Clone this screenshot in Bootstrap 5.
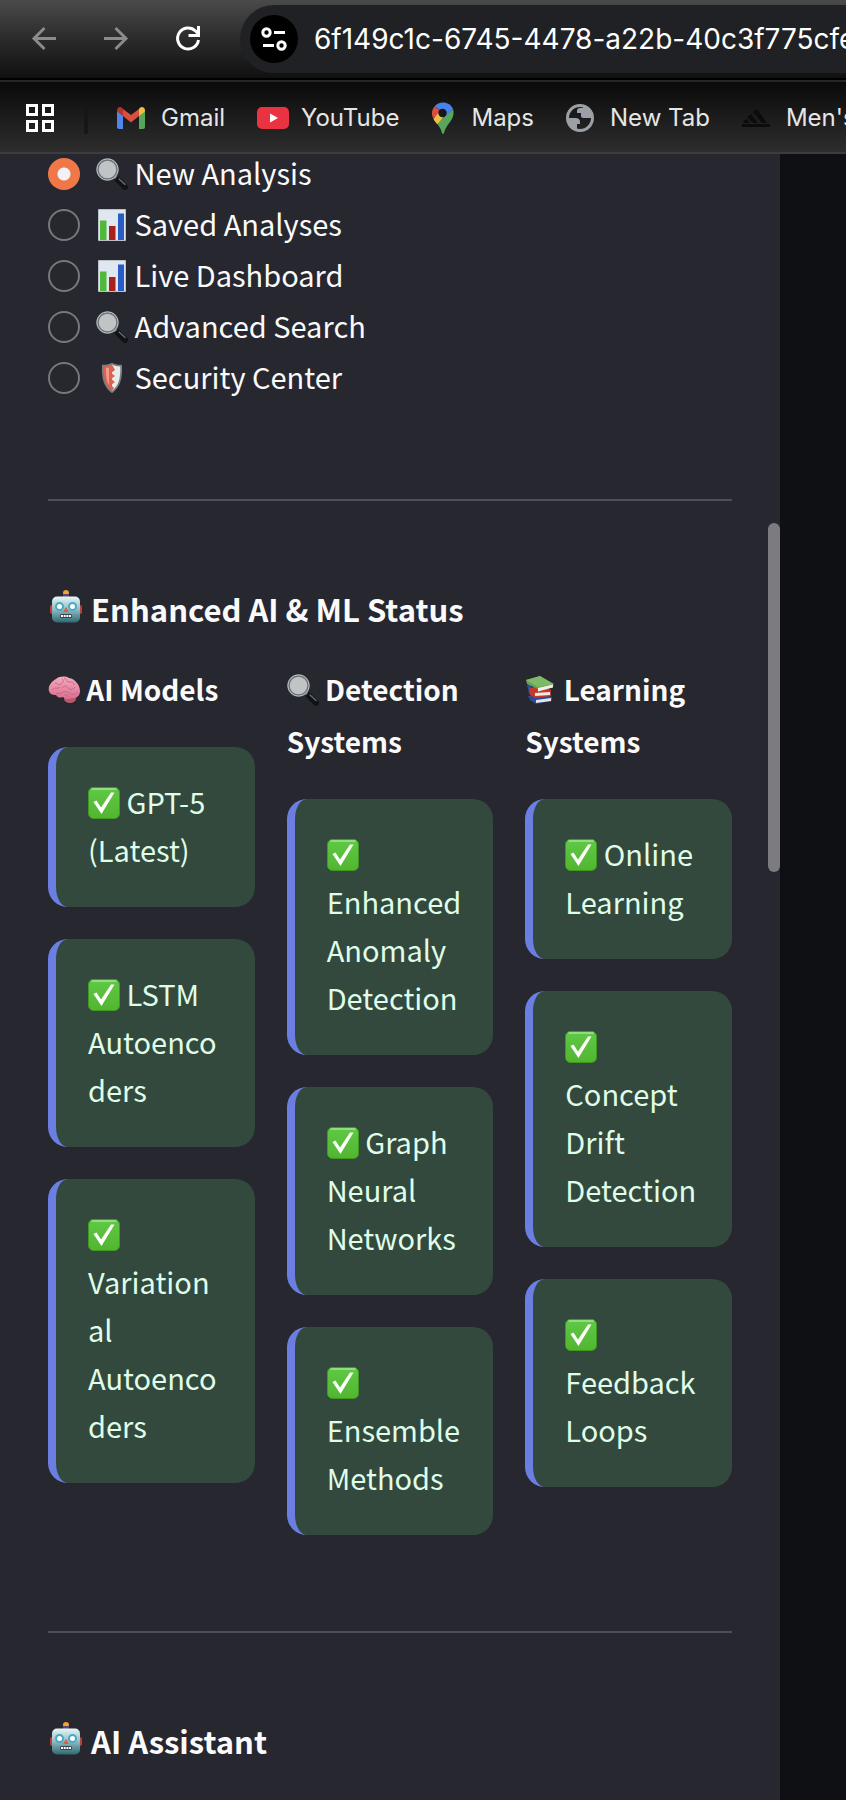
<!DOCTYPE html>
<html lang="en">
<head>
<meta charset="utf-8">
<meta name="viewport" content="width=device-width, initial-scale=1">
<title>Enhanced AI &amp; ML Status</title>
<link href="https://cdn.jsdelivr.net/npm/bootstrap@5.3.0/dist/css/bootstrap.min.css" rel="stylesheet">
<style>
  body { background: #0e1014; color: #fafafa; font-family: "Noto Sans CJK SC", "Noto Sans", sans-serif; font-size: 29px; line-height: 48px; overflow-x: hidden; }
  a { color: inherit; text-decoration: none; }
  .chrome { font-family: Inter, Roboto, sans-serif; white-space: nowrap; }
  .chrome svg { flex: none; }
  .toolbar { height: 78px; padding: 0 0 0 28px; background: linear-gradient(#4a4a4a, #2b2b2b 50%, #101010); }
  .tool-set { gap: 40px; }
  .tool-btn { width: 32px; height: 32px; padding: 0; border: 0; background: none; flex: none; }
  .address { height: 68px; margin-left: 36px; padding-left: 10px; border-radius: 34px 0 0 34px; background: #202124; min-width: 0; }
  .site-btn { width: 48px; height: 48px; padding: 0; border: 0; border-radius: 50%; background: #000; }
  .url-input { border: 0; background: none; color: #fff; font-size: 28px; line-height: 40px; padding: 0; outline: 0; min-width: 0; }
  .bookmarks { height: 74px; padding: 2px 0 0 26px; border-top: 2px solid #262626; border-bottom: 2px solid #3c3c3c; background: linear-gradient(#0a0a0a, #2d2d2d); color: #e6e6e6; font-size: 24px; line-height: 32px; box-shadow: 0 -2px #000; margin-top: 2px; }
  .divider { width: 4px; height: 32px; margin: 0 29px 0 26px; background: #161616; border-radius: 2px; flex: none; }
  .bookmark-set { gap: 32px; }
  .sidebar { width: calc(100% - 66px); max-width: 780px; min-height: calc(100vh - 154px); background: #272730; padding: 4px 48px 32px; }
  .nav-options { gap: 19px; padding-bottom: 9px; }
  .nav-option { gap: 16px; height: 32px; line-height: 28px; }
  .nav-option input { appearance: none; width: 32px; height: 32px; margin: 0; border: 2px solid #77777c; border-radius: 50%; flex: none; }
  .nav-option input:checked { border: 0; background: radial-gradient(circle, #f0f2f6 6px, #f07848 7px); }
  .rule { margin: 96px 0 0; border: 0; border-top: 2px solid #4f4f58; opacity: 1; }
  .title { margin: 86px 0 0; font-size: 31px; line-height: 44px; font-weight: 700; }
  .group-title { font-size: 28px; line-height: 52px; font-weight: 700; margin: 0; }
  .status-cols { display: grid; grid-template-columns: repeat(3, minmax(0, 1fr)); gap: 32px; margin-top: 32px; }
  .status-col { display: flex; flex-direction: column; gap: 32px; }
  .status-box { background: #34493e; color: #dffde9; border-left: 8px solid #6b7fe3; border-radius: 20px; padding: 30px 32px 34px; overflow-wrap: anywhere; }
  .emo { width: 32px; height: 32px; vertical-align: -5px; }
  .title .emo { width: 36px; height: 36px; vertical-align: -3px; }
  .thumb { width: 12px; height: 349px; top: 369px; right: 0; border-radius: 6px; background: #7b7b80; }
</style>
</head>
<body>
<svg class="position-absolute" width="0" height="0" aria-hidden="true">
  <defs>
    <linearGradient id="gCheck" x1="0" y1="0" x2="0" y2="1"><stop offset="0" stop-color="#5fc946"/><stop offset="1" stop-color="#52b52f"/></linearGradient>
    <linearGradient id="gRobot" x1="0" y1="0" x2="0" y2="1"><stop offset="0" stop-color="#e6f7f7"/><stop offset=".5" stop-color="#8fbcc3"/><stop offset="1" stop-color="#2f6873"/></linearGradient>
    <linearGradient id="gBrain" x1="0" y1="0" x2="0" y2="1"><stop offset="0" stop-color="#f5a9c0"/><stop offset="1" stop-color="#d9708f"/></linearGradient>
  </defs>
  <symbol id="check" viewBox="0 0 32 32"><rect x=".5" y=".5" width="31" height="31" rx="5" fill="url(#gCheck)" stroke="#3f9a24"/><path d="M4 2h24" stroke="#a5e58f" stroke-width="1.5" stroke-linecap="round"/><path d="M5.500 15l3-1.500 4.500 7L23 5.500h3.500L13.500 27z" fill="#fff"/></symbol>
  <symbol id="lens" viewBox="0 0 32 32"><path d="M18 18l4 4" stroke="#8a9196" stroke-width="3"/><path d="M22 22l7 7" stroke="#101314" stroke-width="6" stroke-linecap="round"/><path d="M23 21l6 5.500" stroke="#6b7377" stroke-width="1.200" stroke-linecap="round"/><circle cx="11.500" cy="11.500" r="10" fill="#c2c3c5" stroke="#6d7478" stroke-width="2.500"/><circle cx="11.500" cy="11.500" r="10.600" fill="none" stroke="#b6c2ca" stroke-width="1"/></symbol>
  <symbol id="chart" viewBox="0 0 32 32"><path d="M2.500.500h27v31h-27z" fill="#dfe8f1" stroke="#b9c0ca"/><path d="M4 11.500h6.500V31H4z" fill="#50b93a"/><path d="M13 17h6.500v14H13z" fill="#a9211b"/><path d="M22 4.500h6V31h-6z" fill="#285bc4"/></symbol>
  <symbol id="shield" viewBox="0 0 32 32"><path d="M16 .700c3 1.800 6.500 2 10 2 .6 14-1.500 22-10 28.500C7.500 24.700 5.400 16.700 6 2.700c3.500 0 7-.2 10-2z" fill="#777d80"/><path d="M16 2.500c2.700 1.400 5.500 1.900 8.300 2 .3 12.200-1.600 19-8.300 24.400z" fill="#e9eaea"/><path d="M16 2.500C13.300 3.900 10.500 4.400 7.700 4.500 7.400 16.700 9.300 23.500 16 28.900l2-3-3-3 4-3-4-3 4-3-4-3 4-3z" fill="#dc6350"/><path d="M10 6c0 8 .5 13 3 17V5.500z" fill="#f29b88"/></symbol>
  <symbol id="robot" viewBox="-2 -1 36 36"><circle cx="16" cy="3" r="3" fill="#f0a32d"/><path d="M13 4h6v4h-6z" fill="#5c4476"/><rect x="0" y="15" width="4" height="9" rx="2" fill="#bd4038"/><rect x="28" y="15" width="4" height="9" rx="2" fill="#bd4038"/><rect x="2" y="6.500" width="28" height="26" rx="5" fill="url(#gRobot)"/><g fill="#fff" stroke="#49a9c4" stroke-width="2"><circle cx="9.500" cy="16.500" r="3.500"/><circle cx="22.500" cy="16.500" r="3.500"/></g><path d="M16 17l3 5h-6z" fill="#dc5d4a"/><rect x="10" y="24" width="12" height="4" rx="1.500" fill="#37444a"/><path d="M11 26h10" stroke="#fff" stroke-width="2" stroke-dasharray="2 .7"/></symbol>
  <symbol id="brain" viewBox="0 0 32 32"><ellipse cx="22" cy="25" rx="6" ry="4" fill="#b9586f"/><path d="M1 17C-.500 12 4 7 8 5c4-3 9-3 13-1 6 1 11 7 11 13 0 5-4 8-8 7-4 2-7 1-9-1-3 1-5 1-7-2-4 0-6-1-7-4z" fill="url(#gBrain)"/><path d="M4 16c3-4 5 0 8-3M7 9c3 0 3 3 6 1s3-4 1-5M16 4c3 1 2 4 5 4s5 0 5 3M14 14c2-3 5-2 6 0s5 2 7-1M8 20c2-2 4 1 6-1s5-2 7 0 6 2 9-1M16 22c1-2 4-1 5 1" fill="none" stroke="#c9688a" stroke-width="1"/></symbol>
  <symbol id="books" viewBox="0 0 32 32"><path d="M3 22l14-2 10 3v4l-16 3-6-4z" fill="#2b4c9a"/><path d="M11 26l15-2v3l-15 2z" fill="#e6e6e6"/><path d="M2 11l4-1 1 11-3-1z" fill="#2b4c9a"/><path d="M4 14l12-2 10 4v6l-16 2-5-3z" fill="#c13a2c"/><path d="M10 19l15-1v3l-15 1z" fill="#f0ece4"/><path d="M1 6L15 2l14 9-16 4L2 10z" fill="#67a450"/><path d="M1 6L15 2l14 8-16 3z" fill="#7fb868"/><path d="M13 14l15-3.500v3L13 17.500z" fill="#f0f0ea"/></symbol>
</svg>

<header class="chrome overflow-hidden">
  <div class="toolbar d-flex align-items-center">
    <div class="tool-set d-flex">
      <button class="tool-btn" type="button" aria-label="Back"><svg class="d-block" width="32" height="32" viewBox="0 0 32 32" fill="none" stroke="#8b8b8b" stroke-width="3"><path d="M28 15.500H6M16.500 5L6 15.500 16.500 26"/></svg></button>
      <button class="tool-btn" type="button" aria-label="Forward"><svg class="d-block" width="32" height="32" viewBox="0 0 32 32" fill="none" stroke="#8b8b8b" stroke-width="3"><path d="M4 15.500h22M15.500 5L26 15.500 15.500 26"/></svg></button>
      <button class="tool-btn" type="button" aria-label="Reload"><svg class="d-block" width="32" height="32" viewBox="0 0 32 32" fill="none" stroke="#fff" stroke-width="3"><path d="M26.500 17A10.500 10.500 0 1 1 23.500 8l3 3M26.500 3v9.500h-10"/></svg></button>
    </div>
    <div class="address d-flex align-items-center flex-grow-1">
      <button class="site-btn flex-shrink-0" type="button" aria-label="Site information"><svg class="d-block m-auto" width="28" height="28" viewBox="0 0 28 28" fill="none" stroke="#fff" stroke-width="3"><circle cx="6.500" cy="7.500" r="3.700"/><path d="M14 7.500h11M3 20.500h11"/><circle cx="21.500" cy="20.500" r="3.700"/></svg></button>
      <input class="url-input flex-grow-1 ms-3" type="text" aria-label="Address" value="6f149c1c-6745-4478-a22b-40c3f775cfe">
    </div>
  </div>
  <nav class="bookmarks d-flex align-items-center" aria-label="Bookmarks">
    <button class="tool-btn" type="button" aria-label="Apps"><svg class="d-block" width="28" height="28" viewBox="0 0 28 28" fill="none" stroke="#fff" stroke-width="3"><path d="M1.500 1.500h9v9h-9zM17.500 1.500h9v9h-9zM1.500 17.500h9v9h-9zM17.500 17.500h9v9h-9z"/></svg></button>
    <span class="divider"></span>
    <div class="bookmark-set d-flex">
      <a class="d-flex align-items-center gap-3" href="#"><svg width="28" height="22" viewBox="0 0 28 22"><path d="M0 4l6 4v14H2a2 2 0 0 1-2-2z" fill="#5086ec"/><path d="M28 4l-6 4v14h4a2 2 0 0 0 2-2z" fill="#58a55c"/><path d="M6 2l8 6 8-6v7l-8 6.500L6 9z" fill="#d95040"/><path d="M0 3.500C0 .500 3-.800 5 .800L6 2v7L0 4.500z" fill="#b5352a"/><path d="M28 3.500c0-3-3-4.300-5-2.700L22 2v7l6-4.500z" fill="#f2bd42"/></svg>Gmail</a>
      <a class="d-flex align-items-center" style="gap:12px" href="#"><svg width="32" height="22" viewBox="0 0 32 22"><rect width="32" height="22" rx="5" fill="#ea3340"/><path d="M13 6.500l8 4.500-8 4.500z" fill="#fff"/></svg>YouTube</a>
      <a class="d-flex align-items-center gap-3" href="#"><svg width="24" height="32" viewBox="0 0 24 32"><path d="M22 7c1.500 5 0 9-3 13-3.500 4.500-5 7-6 11-.5 1.300-1.500 1.300-2 0-1-4-2.500-6-5-9.500z" fill="#58a55c"/><path d="M7.500 9.500L2.500 17c1 2 2.300 3.500 3.700 5.200L15.500 12z" fill="#f2bd42"/><path d="M3.500 4.500l5.500 4L2.500 17C.500 13 0 9 3.500 4.500z" fill="#d95040"/><path d="M3.500 4.500C8-1.500 19-1 22 7l-7 7-6-6z" fill="#4a80ea"/><circle cx="11.500" cy="11" r="4.200" fill="#171717"/></svg>Maps</a>
      <a class="d-flex align-items-center gap-3" href="#"><svg width="28" height="28" viewBox="0 0 28 28"><circle cx="14" cy="14" r="12.500" fill="none" stroke="#9aa0a6" stroke-width="3"/><path d="M2 14h7c3 0 5 1 5 4v2h-3v6C5 25 1 19 2 14zM17 2v2h-3c-2 0-3 1-3 3v2h4v3c0 2 2 2 4 2h7c1-5-3-11-9-12z" fill="#9aa0a6"/></svg>New Tab</a>
      <a class="d-flex align-items-center gap-3" href="#"><svg width="28" height="20" viewBox="0 0 28 20" fill="#0c0c0c"><path d="M11 4l4-3 10 14h-5zM5 9l4-3 7 9h-5zM1 13l4-2 3 4H2zM0 16h28v3H0z"/></svg>Men's</a>
    </div>
  </nav>
</header>

<main class="sidebar position-relative">
  <div class="thumb position-absolute"></div>
  <fieldset class="nav-options d-flex flex-column">
    <legend class="visually-hidden">Navigation</legend>
    <label class="nav-option d-flex"><input type="radio" name="page" checked><span><svg class="emo"><use href="#lens"/></svg> New Analysis</span></label>
    <label class="nav-option d-flex"><input type="radio" name="page"><span><svg class="emo"><use href="#chart"/></svg> Saved Analyses</span></label>
    <label class="nav-option d-flex"><input type="radio" name="page"><span><svg class="emo"><use href="#chart"/></svg> Live Dashboard</span></label>
    <label class="nav-option d-flex"><input type="radio" name="page"><span><svg class="emo"><use href="#lens"/></svg> Advanced Search</span></label>
    <label class="nav-option d-flex"><input type="radio" name="page"><span><svg class="emo"><use href="#shield"/></svg> Security Center</span></label>
  </fieldset>
  <hr class="rule">
  <h3 class="title"><svg class="emo"><use href="#robot"/></svg> Enhanced AI &amp; ML Status</h3>
  <div class="status-cols">
    <section class="status-col">
      <h4 class="group-title"><svg class="emo"><use href="#brain"/></svg> AI Models</h4>
      <div class="status-box"><svg class="emo"><use href="#check"/></svg> GPT-5 (Latest)</div>
      <div class="status-box"><svg class="emo"><use href="#check"/></svg> LSTM Autoencoders</div>
      <div class="status-box"><svg class="emo"><use href="#check"/></svg> Variational Autoencoders</div>
    </section>
    <section class="status-col">
      <h4 class="group-title"><svg class="emo"><use href="#lens"/></svg> Detection Systems</h4>
      <div class="status-box"><svg class="emo"><use href="#check"/></svg> Enhanced Anomaly Detection</div>
      <div class="status-box"><svg class="emo"><use href="#check"/></svg> Graph Neural Networks</div>
      <div class="status-box"><svg class="emo"><use href="#check"/></svg> Ensemble Methods</div>
    </section>
    <section class="status-col">
      <h4 class="group-title"><svg class="emo"><use href="#books"/></svg> Learning Systems</h4>
      <div class="status-box"><svg class="emo"><use href="#check"/></svg> Online Learning</div>
      <div class="status-box"><svg class="emo"><use href="#check"/></svg> Concept Drift Detection</div>
      <div class="status-box"><svg class="emo"><use href="#check"/></svg> Feedback Loops</div>
    </section>
  </div>
  <hr class="rule">
  <h3 class="title"><svg class="emo"><use href="#robot"/></svg> AI Assistant</h3>
</main>
<script src="https://cdn.jsdelivr.net/npm/bootstrap@5.3.0/dist/js/bootstrap.bundle.min.js"></script>
</body>
</html>
